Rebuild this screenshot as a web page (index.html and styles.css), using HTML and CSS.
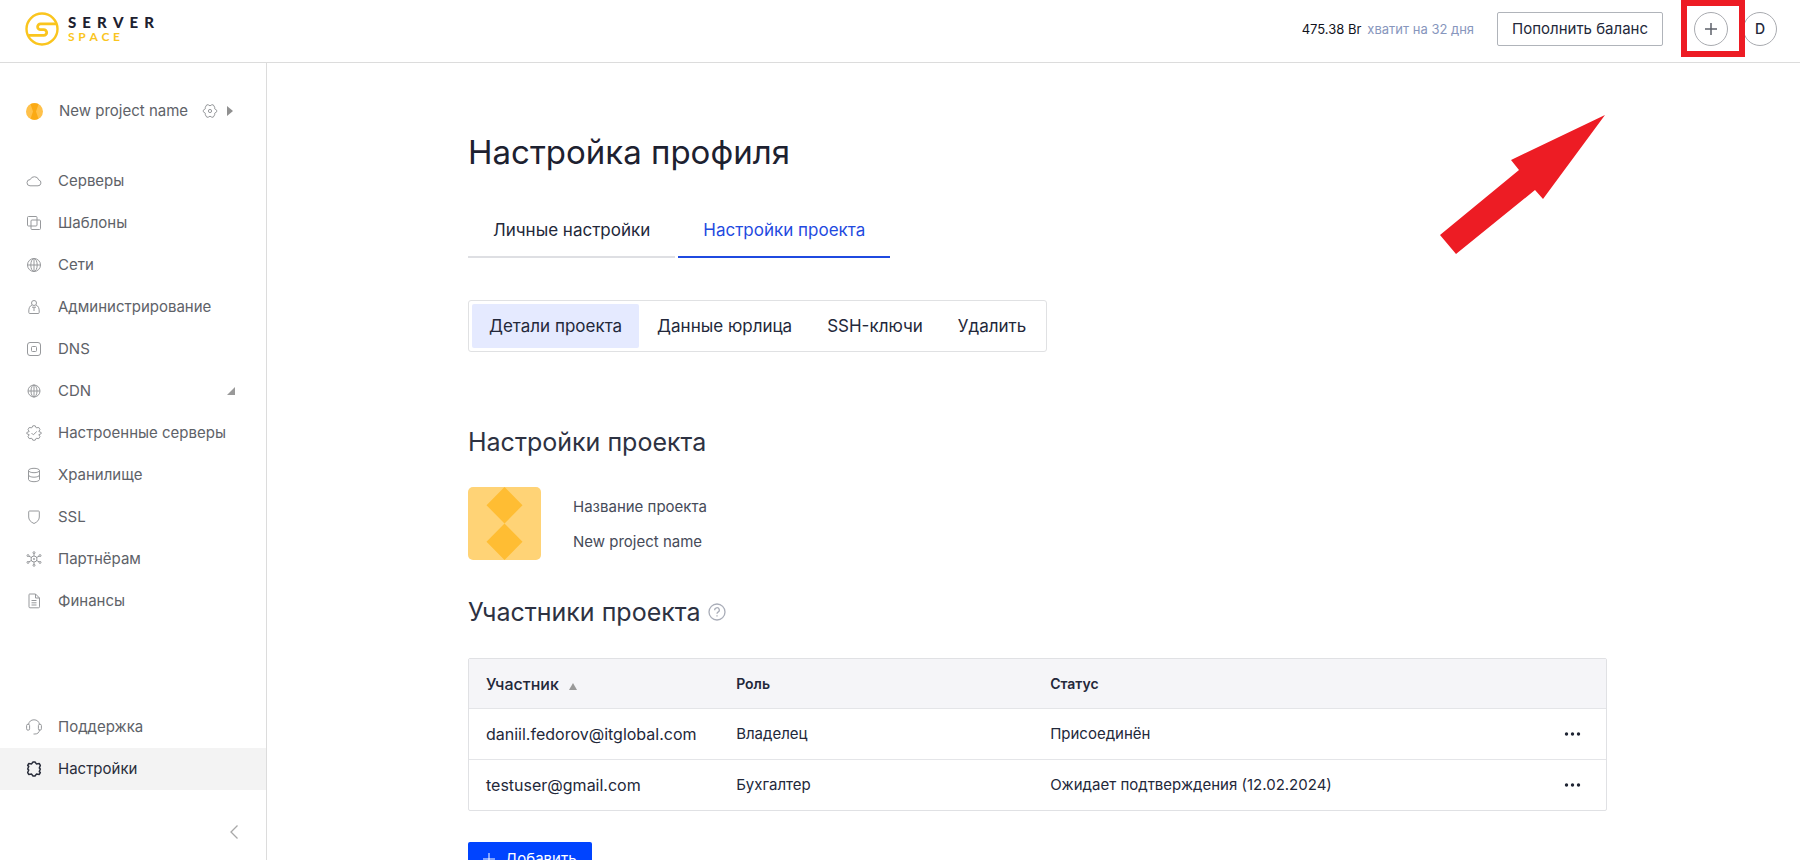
FILE: index.html
```html
<!DOCTYPE html>
<html lang="ru">
<head>
<meta charset="utf-8">
<meta name="viewport" content="width=device-width, initial-scale=1">
<title>Настройка профиля</title>
<link rel="stylesheet" href="styles.css">
</head>
<body>
<div class="app">
  <header class="header">
    <a class="logo" href="#" aria-label="Serverspace">
      <svg class="logo-mark" viewBox="0 0 34 34" fill="none" stroke="#fac51e" stroke-width="2.400">
        <circle cx="17" cy="17" r="15.500"/>
        <path d="M31.500 11.800H15.500A2.900 2.900 0 0 0 15.500 17.600H18.800A2.900 2.900 0 0 1 18.800 23.400H3.500" stroke-width="2.800"/>
      </svg>
      <span class="logo-text">
        <span class="logo-top"><span>S</span><span>E</span><span>R</span><span>V</span><span>E</span><span>R</span></span>
        <span class="logo-bottom"><span>S</span><span>P</span><span>A</span><span>C</span><span>E</span></span>
      </span>
    </a>
    <div class="header-right">
      <p class="balance"><span>475.38 Br</span><span class="balance-note">хватит на 32 дня</span></p>
      <button class="top-up" type="button">Пополнить баланс</button>
      <div class="marked">
        <button class="round" type="button" aria-label="Создать">
          <svg width="14" height="14" viewBox="0 0 14 14" stroke="#5d616b" stroke-width="1.500"><path d="M7 1v12M1 7h12"/></svg>
        </button>
        <span class="mark"></span>
      </div>
      <button class="round user" type="button">D</button>
    </div>
  </header>

  <div class="body">
    <aside class="sidebar">
      <div class="project">
        <svg class="project-dot" viewBox="0 0 17 17"><circle cx="8.500" cy="8.500" r="8.500" fill="#ffc14a"/><path d="M4.500 1.300Q8.500 -1 12.500 1.300L10 8.500L12.500 15.700Q8.500 18 4.500 15.700L7 8.500z" fill="#fbaa14"/></svg>
        <span class="project-name">New project name</span>
        <button class="plain" type="button" aria-label="Настройки проекта">
          <svg class="icon" viewBox="0 0 16 16"><path d="M4.800 1.800h1.400L8 2.800l1.800-1h1.400l1.500 2.400v1.600l2 1.400v1.600l-2 1.400v1.600l-1.500 2.400H9.800L8 13.200l-1.800 1H4.800l-1.500-2.400v-1.600l-2-1.400V7.200l2-1.400V4.200z"/><circle cx="8" cy="8" r="1.600"/></svg>
        </button>
        <svg class="caret" width="6" height="10" viewBox="0 0 6 10"><path d="M0 0l6 5-6 5z" fill="#909090"/></svg>
      </div>
      <nav class="nav">
        <a href="#"><svg class="icon" viewBox="0 0 16 16"><path d="M4 12.800h8a3 3 0 0 0 .7-5.900A4.500 4.500 0 0 0 4.200 6.600 3.100 3.100 0 0 0 4 12.800z"/></svg>Серверы</a>
        <a href="#"><svg class="icon" viewBox="0 0 16 16"><rect x="1.500" y="1.500" width="9.500" height="9.500" rx="1"/><rect x="5" y="5" width="9.500" height="9.500" rx="1"/></svg>Шаблоны</a>
        <a href="#"><svg class="icon" viewBox="0 0 16 16"><circle cx="8" cy="8" r="6.500"/><ellipse cx="8" cy="8" rx="3.200" ry="6.500"/><path d="M8 1.500v13M1.500 8h13"/></svg>Сети</a>
        <a href="#"><svg class="icon" viewBox="0 0 16 16"><circle cx="8" cy="4" r="2.500"/><path d="M6 6C3.500 7 2.800 9.500 2.800 12v1.500q0 1 1 1h8.400q1 0 1-1V12c0-2.500-.7-5-3.200-6M6 8.200h4M8 8.200V12"/></svg>Администрирование</a>
        <a href="#"><svg class="icon" viewBox="0 0 16 16"><rect x="1.500" y="1.500" width="13" height="13" rx="2.500"/><rect x="5.500" y="5.500" width="5" height="5" rx="1"/></svg>DNS</a>
        <a href="#"><svg class="icon" viewBox="0 0 16 16"><circle cx="8" cy="8" r="6"/><ellipse cx="8" cy="8" rx="3" ry="6"/><path d="M8 2v12M2 8h12"/></svg>CDN<svg class="expand" width="8" height="8" viewBox="0 0 8 8"><path d="M8 0v8H0z" fill="#999"/></svg></a>
        <a href="#"><svg class="icon" viewBox="0 0 16 16"><path d="M6.800.8h2.400l1 2 2.600-.3 1.200 2.100L12.800 6.500l2.400 1v1.200l-2.400 1L14 11.500l-1.200 2.100-2.600-.3-1 1.900H6.800l-1-1.900-2.600.3L2 11.500l1.200-1.800-2.400-1V7.500l2.400-1L2 4.600l1.200-2.100 2.600.3z"/><path d="M5.500 8l1.800 1.800L10.800 6.500"/></svg>Настроенные серверы</a>
        <a href="#"><svg class="icon" viewBox="0 0 16 16"><ellipse cx="8" cy="3.500" rx="5.500" ry="2.200"/><path d="M2.500 3.500v9c0 1.200 2.500 2.200 5.500 2.200s5.500-1 5.500-2.200v-9M2.500 8c0 1.200 2.500 2.200 5.500 2.200s5.500-1 5.500-2.200"/></svg>Хранилище</a>
        <a href="#"><svg class="icon" viewBox="0 0 16 16"><path d="M3.500 2h9q.8 0 .8.800V8c0 3-2 5-5.300 6.500C4.700 13 2.700 11 2.700 8V2.800q0-.8.800-.8z"/></svg>SSL</a>
        <a href="#"><svg class="icon" viewBox="0 0 16 16"><circle cx="8" cy="8" r="3"/><circle cx="8" cy="1.700" r="1"/><circle cx="8" cy="14.300" r="1"/><circle cx="2" cy="4.600" r="1"/><circle cx="14" cy="4.600" r="1"/><circle cx="2" cy="11.400" r="1"/><circle cx="14" cy="11.400" r="1"/><path d="M8 2.700V5M8 11v2.300M2.900 5.200l2.500 1.300M13.100 5.200l-2.500 1.300M2.900 10.800l2.500-1.300M13.100 10.800l-2.500-1.300"/><circle cx="8" cy="8" r=".6"/></svg>Партнёрам</a>
        <a href="#"><svg class="icon" viewBox="0 0 16 16"><path d="M3.500 1h6l4 4v8.800q0 1-1 1h-8.500q-1 0-1-1V2q0-1 .5-1zM9.500 1v4h4M5.500 7.500h5M5.500 9.800h5M5.500 12h5"/></svg>Финансы</a>
      </nav>
      <nav class="nav nav-bottom">
        <a href="#"><svg class="icon" viewBox="0 0 16 16"><path d="M2.500 5.500C3 2.500 5 .8 8 .8s5 1.700 5.500 4.700M13.500 10.500c0 3-2 4.500-4.500 4.500H7.500"/><rect x=".6" y="5.200" width="3" height="6" rx="1.400"/><rect x="12.400" y="5.200" width="3" height="6" rx="1.400"/></svg>Поддержка</a>
        <a class="current" href="#"><svg class="icon" viewBox="0 0 16 16"><path d="M7 1h2l1.400 1.900 2.900-.3 1 1.800-1 2.600 1 1-1 2.600 1 1-1 1.800-2.900-.3L9 15H7l-1.400-1.900-2.900.3-1-1.800 1-2.600-1-1 1-2.600-1-1 1-1.800 2.900.3z"/></svg>Настройки</a>
      </nav>
      <button class="plain collapse" type="button" aria-label="Свернуть меню">
        <svg width="8" height="14" viewBox="0 0 8 14" fill="none" stroke="#a8a8a8" stroke-width="1.300"><path d="M7.500.5 1 7l6.500 6.500"/></svg>
      </button>
    </aside>

    <main class="main">
      <h1>Настройка профиля</h1>
      <nav class="tabs">
        <a href="#">Личные настройки</a>
        <a class="active" href="#">Настройки проекта</a>
      </nav>
      <nav class="segments">
        <button class="active" type="button">Детали проекта</button>
        <button type="button">Данные юрлица</button>
        <button type="button">SSH-ключи</button>
        <button type="button">Удалить</button>
      </nav>

      <section>
        <h2>Настройки проекта</h2>
        <div class="details">
          <svg class="avatar" viewBox="0 0 73 73"><rect width="73" height="73" rx="5" fill="#ffd376"/><path d="M36.500 0l18 18.250-18 18.250-18-18.250zM36.500 36.500l18 18.250-18 18.250-18-18.250z" fill="#ffbd33"/></svg>
          <div class="details-text"><span>Название проекта</span><span>New project name</span></div>
        </div>
      </section>

      <section>
        <h2 class="members-title">Участники проекта
          <svg width="18" height="18" viewBox="0 0 18 18" fill="none" stroke="#a9adb8" stroke-width="1.300"><circle cx="9" cy="9" r="8"/><path d="M6.700 7.200A2.300 2.300 0 1 1 10 9.100Q9 9.600 9 10.800M9 12.300v1.300"/></svg>
        </h2>
        <table class="members">
          <thead>
            <tr><th class="member">Участник<svg class="sort" width="8" height="7" viewBox="0 0 8 7"><path d="M4 0l4 7H0z" fill="#999"/></svg></th><th class="role">Роль</th><th>Статус</th><th class="actions"></th></tr>
          </thead>
          <tbody>
            <tr><td class="member">daniil.fedorov@itglobal.com</td><td>Владелец</td><td>Присоединён</td><td class="actions"><button class="plain" type="button" aria-label="Действия"><svg width="18" height="4" viewBox="0 0 18 4" fill="#1f2433"><circle cx="3.500" cy="2" r="1.700"/><circle cx="9.500" cy="2" r="1.700"/><circle cx="15.500" cy="2" r="1.700"/></svg></button></td></tr>
            <tr><td class="member">testuser@gmail.com</td><td>Бухгалтер</td><td>Ожидает подтверждения (12.02.2024)</td><td class="actions"><button class="plain" type="button" aria-label="Действия"><svg width="18" height="4" viewBox="0 0 18 4" fill="#1f2433"><circle cx="3.500" cy="2" r="1.700"/><circle cx="9.500" cy="2" r="1.700"/><circle cx="15.500" cy="2" r="1.700"/></svg></button></td></tr>
          </tbody>
        </table>
        <button class="add" type="button"><svg width="12" height="12" viewBox="0 0 12 12" stroke="#fff" stroke-width="1"><path d="M6 0v12M0 6h12"/></svg>Добавить</button>
      </section>

      <svg class="arrow" width="166" height="140" viewBox="0 0 166 140"><path d="M165 0 71 45l8 10L0 120l16 19 79-64 8 9z" fill="#ed1c24"/></svg>
    </main>
  </div>
</div>
</body>
</html>
```

FILE: styles.css
```css
* { box-sizing: border-box; }

body {
  margin: 0;
  font-family: Inter, "Liberation Sans", sans-serif;
  font-size: 15px;
  line-height: 20px;
  color: #23283a;
  background: #fff;
}

button { font: inherit; color: inherit; cursor: pointer; }
a { color: inherit; text-decoration: none; }
h1, h2, p { margin: 0; font-weight: 400; }
svg { flex: none; display: block; }

.plain { padding: 0; border: 0; background: none; }

.app { display: flex; flex-direction: column; height: 100vh; overflow: hidden; }

.header {
  display: flex;
  flex: none;
  align-items: center;
  justify-content: space-between;
  padding: 12px 23px 16px 25px;
  border-bottom: 1px solid #dcdcdc;
}

.logo { display: flex; align-items: center; gap: 9px; font-family: Lato, sans-serif; }
.logo-mark { width: 34px; height: 34px; }
.logo-text { display: grid; gap: 2px; }
.logo-top, .logo-bottom { display: flex; justify-content: space-between; font-weight: 900; }
.logo-top { width: 86px; font-size: 15px; line-height: 14px; color: #1d2130; }
.logo-bottom { width: 52px; font-size: 12px; line-height: 12px; font-weight: 700; color: #fac51e; }

.header-right { display: flex; align-items: center; }
.balance { display: flex; gap: 6px; margin-right: 23px; font-size: 13px; color: #11131c; }
.balance-note { color: #8796bd; }
.top-up {
  height: 34px;
  padding: 0 14px;
  border: 1px solid #b0b4ba;
  border-radius: 2px;
  background: #fff;
}
.round {
  display: grid;
  place-items: center;
  width: 34px;
  height: 34px;
  padding: 0;
  border: 1px solid #a9abb0;
  border-radius: 50%;
  background: #fff;
  font-size: 14px;
  font-weight: 500;
}
.marked { position: relative; z-index: 1; margin: 0 15px 0 31px; }
.mark {
  position: absolute;
  inset: -12px -17px -11px -13px;
  border: 6px solid #ed1c24;
  pointer-events: none;
}

.body { display: flex; flex: 1; min-height: 0; }

.sidebar {
  display: flex;
  flex: none;
  flex-direction: column;
  width: 267px;
  padding-top: 28px;
  border-right: 1px solid #dcdcdc;
  color: #5e6268;
}
.project { display: flex; align-items: center; height: 40px; padding-left: 26px; margin-bottom: 29px; }
.project-dot { width: 17px; height: 17px; margin-right: 16px; }
.project-name { margin-right: 14px; }
.caret { margin-left: 9px; }
.icon { width: 16px; height: 16px; fill: none; stroke: #97999c; stroke-width: 1; stroke-linejoin: round; }
.nav a { display: flex; align-items: center; gap: 16px; height: 42px; padding: 0 31px 0 26px; white-space: nowrap; }
.nav .expand { margin-left: auto; }
.nav .current { background: #f3f3f3; color: #292d3a; }
.current .icon { stroke: #292d3a; stroke-width: 1.500; }
.nav-bottom { margin-top: auto; }
.collapse { align-self: flex-end; padding: 35px 28px 21px; }

.main {
  position: relative;
  flex: 1;
  min-width: 0;
  padding: 69px 193px 40px 201px;
  overflow-y: auto;
  scrollbar-width: none;
}
h1 { font-size: 33px; line-height: 40px; color: #1d2130; }
h2 { font-size: 25px; line-height: 34px; color: #2d3242; }

.tabs { display: flex; gap: 3px; margin-top: 32px; font-size: 17px; line-height: 24px; }
.tabs a { padding: 14px 25px; border-bottom: 2px solid #dedfe3; }
.tabs .active { border-color: #1f4ae0; color: #1f4ae0; }

.segments {
  display: flex;
  gap: 1px;
  width: fit-content;
  margin: 42px 0 73px;
  padding: 3px;
  border: 1px solid #e0e1e3;
  border-radius: 3px;
}
.segments button {
  padding: 10px 17px;
  border: 0;
  border-radius: 2px;
  background: none;
  font-size: 17px;
  line-height: 24px;
}
.segments .active { background: #e5eaff; }

.details { display: flex; gap: 32px; margin: 28px 0 35px; }
.avatar { width: 73px; height: 73px; }
.details-text { display: grid; gap: 15px; align-content: center; padding-top: 2px; color: #464b59; }

.members-title { display: flex; align-items: center; gap: 8px; }

.members {
  width: 100%;
  margin: 29px 0 31px;
  border: 1px solid #e0e1e4;
  border-radius: 2px;
  border-spacing: 0;
  table-layout: fixed;
}
.members th { background: #f5f5f8; font-size: 14px; font-weight: 600; }
.members th, .members td { height: 49px; padding: 0 17px; text-align: left; }
.members tbody td { height: 51px; border-top: 1px solid #e4e5e8; }
.members .member { width: 22%; font-size: 16px; }
.members th.member { font-weight: 500; }
.members .role { width: 314px; }
.members .actions { width: 60px; }
.members .plain { display: block; }
.sort { display: inline-block; margin-left: 10px; }

.add {
  display: flex;
  align-items: center;
  gap: 10px;
  padding: 7px 15px;
  border: 0;
  border-radius: 2px;
  background: #0044ff;
  color: #fff;
}

.arrow { position: absolute; top: 52px; right: 194px; pointer-events: none; }
```
